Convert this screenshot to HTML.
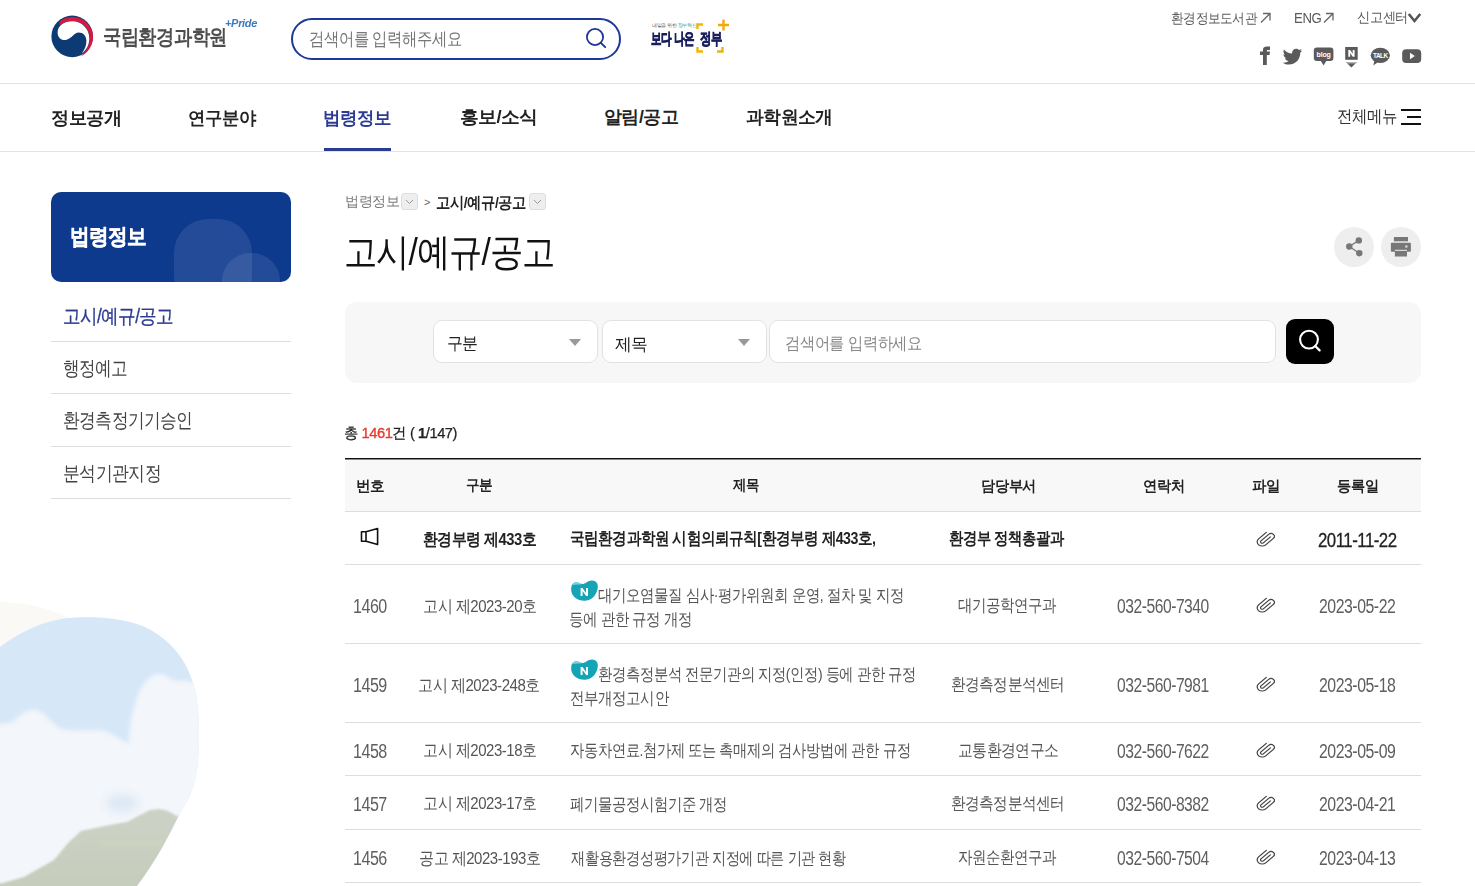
<!DOCTYPE html>
<html lang="ko"><head><meta charset="utf-8"><title>고시/예규/공고 | 국립환경과학원</title>
<style>
html,body{margin:0;padding:0;background:#fff;}
body{width:1475px;height:886px;overflow:hidden;position:relative;font-family:"Liberation Sans",sans-serif;}
.t{position:absolute;white-space:nowrap;line-height:1;transform-origin:0 0;}
.a{position:absolute;}
.hl{position:absolute;left:0;width:1475px;height:1px;background:#e3e3e3;}
.sbl{position:absolute;left:51px;width:240px;height:1px;background:#dcdcdc;}
.rl{position:absolute;left:345px;width:1076px;height:1px;background:#dddddd;}
.sel{position:absolute;top:320px;height:43px;background:#fff;border:1px solid #e2e2e2;border-radius:9px;box-sizing:border-box;}
.arr{position:absolute;width:0;height:0;border-left:6.5px solid transparent;border-right:6.5px solid transparent;border-top:7px solid #999;}
.clip{position:absolute;width:18px;height:16px;}
.bcbox{position:absolute;top:193px;width:17px;height:17px;box-sizing:border-box;background:#eeeeee;border:1px solid #dedede;border-radius:3px;}
</style></head>
<body>
<!-- header -->
<svg class="a" style="left:50px;top:15px" width="45" height="44" viewBox="50 15 45 44">
  <circle cx="72.2" cy="36.4" r="20.8" fill="#0c3b73"/>
  <path d="M59.5 21.8 C63.5 18.3 68 17 72.5 17 C80 17 86.5 20.5 90.3 27 C92.3 30.5 93 33.5 93 37 C93 46 87.5 53.5 80.2 56.6 C85.8 52.2 89.6 45.6 89.6 38.2 C89.6 28.5 82 21 72.5 21 C67.5 21 63 22.6 59.5 25.2 Z" fill="#d8183f"/>
  <path d="M57.6 32.5 C57.8 25.5 64 21.2 72.3 21.2 C81.6 21.2 89.3 28.6 89.3 38.2 C89.3 44.8 86.3 50.2 81.6 53.6 C84.6 50 86.4 45.6 86.4 41 C86.4 36 83 32.6 78.8 32.6 C73.8 32.6 71.8 38.6 66.6 39.8 C61.4 41 57.5 37.6 57.6 32.5 Z" fill="#ffffff"/>
</svg>
<div class="a" style="left:291px;top:18px;width:330px;height:42px;box-sizing:border-box;border:2px solid #1c3a9a;border-radius:21px;"></div>
<svg class="a" style="left:584px;top:26px" width="24" height="24" viewBox="0 0 24 24">
  <circle cx="11" cy="11" r="8.1" fill="none" stroke="#1c3494" stroke-width="1.8"/>
  <line x1="16.8" y1="16.8" x2="21.2" y2="21.2" stroke="#1c3494" stroke-width="1.9" stroke-linecap="round"/>
</svg>
<!-- 보다 나은 정부 -->
<div class="t" style="left:652px;top:23px;font-size:5px;color:#555;letter-spacing:-0.3px">내일을 위한 <span style="color:#2a9d8f">정부혁신</span></div>
<svg class="a" style="left:694px;top:17px" width="40" height="38" viewBox="0 0 40 38">
  <path d="M9 7.5 H3.5 V12" fill="none" stroke="#f2b705" stroke-width="2.4"/>
  <path d="M3.5 30 V34.5 H9" fill="none" stroke="#f2b705" stroke-width="2.4"/>
  <path d="M23 34.5 H28.5 V30" fill="none" stroke="#e7b416" stroke-width="2.4"/>
  <path d="M29.5 2.5 V13.5 M24 8 H35" fill="none" stroke="#f4a90a" stroke-width="2.4"/>
</svg>
<!-- top links arrows -->
<svg class="a" style="left:1259px;top:11px" width="13" height="13" viewBox="0 0 13 13"><path d="M2 11.5 L11 2.5 M4 2.5 H11 V9.5" fill="none" stroke="#666" stroke-width="1.3"/></svg>
<svg class="a" style="left:1322px;top:11px" width="13" height="13" viewBox="0 0 13 13"><path d="M2 11.5 L11 2.5 M4 2.5 H11 V9.5" fill="none" stroke="#666" stroke-width="1.3"/></svg>
<svg class="a" style="left:1407px;top:12px" width="15" height="12" viewBox="0 0 15 12"><path d="M1.8 2 L7.5 9 L13.2 2" fill="none" stroke="#555" stroke-width="2.6"/></svg>
<!-- social icons -->
<svg class="a" style="left:1255px;top:44px" width="170" height="26" viewBox="1255 44 170 26">
  <path d="M1263 65 V55 H1260 V51.5 H1263 V50 C1263 47 1265 46.5 1267.5 46.5 H1270 V50 H1268 C1267 50 1266.8 50.5 1266.8 51 V51.5 H1270 L1269.5 55 H1266.8 V65 Z" fill="#5a5a5a"/>
  <path d="M1302 50.5 C1301.3 50.8 1300.6 51 1299.8 51.1 C1300.6 50.6 1301.2 49.9 1301.5 49 C1300.7 49.4 1299.9 49.7 1299 49.9 C1298.3 49.1 1297.2 48.7 1296.1 48.7 C1293.9 48.7 1292.1 50.5 1292.1 52.7 C1292.1 53 1292.1 53.3 1292.2 53.6 C1288.9 53.4 1286 51.9 1284 49.4 C1283.7 50 1283.5 50.7 1283.5 51.4 C1283.5 52.8 1284.2 54 1285.3 54.7 C1284.6 54.7 1284 54.5 1283.5 54.2 C1283.5 56.2 1284.9 57.8 1286.7 58.2 C1286.1 58.4 1285.4 58.4 1284.9 58.3 C1285.4 59.9 1286.9 61 1288.6 61.1 C1287.3 62.2 1285.5 62.8 1283.7 62.8 C1283.4 62.8 1283 62.8 1282.7 62.7 C1284.5 63.9 1286.6 64.6 1288.9 64.6 C1296.2 64.6 1300.2 58.6 1300.2 53.3 V52.8 C1301 52.2 1301.6 51.4 1302 50.5 Z" fill="#5a5a5a"/>
  <rect x="1313.8" y="47.6" width="19.6" height="13.4" rx="3" fill="#5a5a5a"/>
  <path d="M1320.5 60.5 L1323.6 65.4 L1326.5 60.5 Z" fill="#5a5a5a"/>
  <text x="1323.6" y="57.3" font-family="Liberation Sans" font-weight="bold" font-size="7" fill="#fff" text-anchor="middle" letter-spacing="-0.2">blog</text>
  <rect x="1345.2" y="47" width="12.5" height="12.8" fill="#5a5a5a"/>
  <path d="M1348.3 56.8 V50 H1350.2 L1352.7 53.8 V50 H1354.6 V56.8 H1352.7 L1350.2 53 V56.8 Z" fill="#fff"/>
  <path d="M1345.8 62 H1357 L1351.4 67.5 Z" fill="#5a5a5a"/>
  <path d="M1346.5 62.8 H1356.3" stroke="#fff" stroke-width="0.8"/>
  <ellipse cx="1380.3" cy="55.3" rx="9.6" ry="7.6" fill="#5a5a5a"/>
  <path d="M1374.5 60 L1373.3 65.6 L1378.5 61.8 Z" fill="#5a5a5a"/>
  <text x="1380.3" y="57.8" font-family="Liberation Sans" font-weight="bold" font-size="6.4" fill="#fff" text-anchor="middle" letter-spacing="-0.5">TALK</text>
  <rect x="1402.2" y="49.2" width="19" height="13.7" rx="4" fill="#5a5a5a"/>
  <path d="M1410 52.8 L1414.8 56 L1410 59.2 Z" fill="#fff"/>
</svg>
<div class="hl" style="top:83px;"></div>
<!-- nav -->
<div class="a" style="left:324px;top:148px;width:67px;height:3px;background:#2a3b90"></div>
<div class="hl" style="top:151px;"></div>
<div class="a" style="left:1401px;top:109px;width:20px;height:2px;background:#111"></div>
<div class="a" style="left:1407px;top:116px;width:14px;height:2px;background:#111"></div>
<div class="a" style="left:1401px;top:123px;width:20px;height:2px;background:#111"></div>
<!-- sidebar -->
<div class="a" style="left:51px;top:192px;width:240px;height:90px;background:#0e3a8e;border-radius:10px;overflow:hidden">
  <div class="a" style="left:123px;top:27px;width:78px;height:90px;border-radius:34px;background:rgba(255,255,255,0.09)"></div>
  <div class="a" style="left:171px;top:61px;width:58px;height:60px;border-radius:28px;background:rgba(255,255,255,0.09)"></div>
</div>
<div class="sbl" style="top:341px"></div>
<div class="sbl" style="top:393px"></div>
<div class="sbl" style="top:446px"></div>
<div class="sbl" style="top:498px"></div>
<!-- sky blob -->
<svg class="a" style="left:0;top:590px" width="215" height="296" viewBox="0 590 215 296">
  <defs>
    <clipPath id="cb"><path d="M0 647 C20 632 45 619 75 617.5 C100 616.5 125 618.5 145 627 C170 639 188 660 195 690 C200 712 200 745 197 770 C194 790 188 800 180 813 C168 838 155 862 137 886 L0 886 Z"/></clipPath>
    <filter id="bl" x="-30%" y="-30%" width="160%" height="160%"><feGaussianBlur stdDeviation="2.2"/></filter>
    <filter id="bl2" x="-50%" y="-50%" width="200%" height="200%"><feGaussianBlur stdDeviation="5"/></filter>
    <filter id="bl3" x="-10%" y="-10%" width="120%" height="120%"><feGaussianBlur stdDeviation="0.8"/></filter>
    <linearGradient id="mg" x1="0" y1="0" x2="0" y2="1"><stop offset="0" stop-color="#cdd2c6"/><stop offset="1" stop-color="#c5ccba"/></linearGradient>
  </defs>
  <path d="M0 602 C20 603 45 605 68 618 C40 622 18 633 0 647 Z" fill="#fbf9f6"/>
  <g clip-path="url(#cb)">
    <rect x="0" y="600" width="215" height="296" fill="#d6e7f8"/>
    <g filter="url(#bl)" fill="#f3f6fa">
      <path d="M-10 726 L13 722 C20 714 28 709 36 710 C44 711 50 722 59 728 C68 731 85 731 97 730 C107 730 115 736 129 744 C129 728 131 712 140 690 C146 680 152 674 160 674 C166 674 170 680 176 681 C182 681 186 680 196 683 L215 686 L215 890 L-10 890 Z"/>
    </g>
    <ellipse cx="122" cy="803" rx="16" ry="9" fill="#dce8f5" filter="url(#bl2)"/>
    <g filter="url(#bl3)">
    <path d="M177 816 L168 811 L160 809 L150 810 L140 815 L127 822 L115 824 L100 827 L81 831 L68 843 L54 860 L24 877 L3 883 L-5 884 L-5 900 L215 900 L215 816 Z" fill="url(#mg)"/>
    <rect x="100" y="840" width="62" height="7" fill="#d6d8c0" opacity="0.35"/>
    </g>
  </g>
</svg>
<!-- breadcrumb boxes -->
<div class="bcbox" style="left:401px"><svg width="15" height="15" viewBox="0 0 15 15" style="position:absolute;left:0;top:0"><path d="M4 6 L7.5 9.5 L11 6" fill="none" stroke="#999" stroke-width="1"/></svg></div>
<div class="t" style="left:424px;top:197px;font-size:11px;color:#666">&gt;</div>
<div class="bcbox" style="left:529px"><svg width="15" height="15" viewBox="0 0 15 15" style="position:absolute;left:0;top:0"><path d="M4 6 L7.5 9.5 L11 6" fill="none" stroke="#999" stroke-width="1"/></svg></div>
<!-- share/print -->
<div class="a" style="left:1334px;top:227px;width:40px;height:40px;border-radius:20px;background:#eeeeee"></div>
<div class="a" style="left:1381px;top:227px;width:40px;height:40px;border-radius:20px;background:#eeeeee"></div>
<svg class="a" style="left:1334px;top:227px" width="40" height="40" viewBox="0 0 40 40">
  <path d="M15.3 19.5 L24.8 13.4 M15.3 19.5 L25.3 26.2" stroke="#777" stroke-width="1.3"/>
  <circle cx="24.8" cy="13.4" r="3.2" fill="#777"/><circle cx="15.3" cy="19.5" r="3.2" fill="#777"/><circle cx="25.3" cy="26.2" r="3.2" fill="#777"/>
</svg>
<svg class="a" style="left:1381px;top:227px" width="40" height="40" viewBox="0 0 40 40">
  <rect x="12.9" y="10" width="14.1" height="4.3" fill="#777"/>
  <rect x="9.9" y="15.7" width="20" height="9" rx="0.8" fill="#777"/>
  <rect x="13.9" y="23.8" width="12.1" height="5.7" fill="#777"/>
  <rect x="13.9" y="22.8" width="12.1" height="1" fill="#eee"/>
  <rect x="24.4" y="18.5" width="2" height="2" fill="#eee"/>
</svg>
<!-- search panel -->
<div class="a" style="left:345px;top:302px;width:1076px;height:81px;background:#f7f7f7;border-radius:12px"></div>
<div class="sel" style="left:433px;width:165px"></div>
<div class="sel" style="left:602px;width:165px"></div>
<div class="sel" style="left:769px;width:507px"></div>
<div class="arr" style="left:569px;top:339px"></div>
<div class="arr" style="left:738px;top:339px"></div>
<div class="a" style="left:1286px;top:319px;width:48px;height:45px;background:#000;border-radius:9px"></div>
<svg class="a" style="left:1286px;top:319px" width="48" height="45" viewBox="0 0 48 45">
  <circle cx="23" cy="20.6" r="8.9" fill="none" stroke="#fff" stroke-width="2.1"/>
  <line x1="29.2" y1="27" x2="33.6" y2="31.4" stroke="#fff" stroke-width="2.3" stroke-linecap="round"/>
</svg>
<!-- table -->
<div class="a" style="left:345px;top:459px;width:1076px;height:52px;background:#f8f8f8"></div>
<div class="a" style="left:345px;top:458px;width:1076px;height:1px;background:#111"></div><div class="a" style="left:345px;top:459px;width:1076px;height:1px;background:#8a8a8a"></div>
<div class="rl" style="top:511px"></div>
<div class="rl" style="top:564px"></div>
<div class="rl" style="top:643px"></div>
<div class="rl" style="top:722px"></div>
<div class="rl" style="top:775px"></div>
<div class="rl" style="top:829px"></div>
<div class="rl" style="top:882px"></div>
<svg class="a" style="left:358px;top:526px" width="24" height="22" viewBox="358 526 24 22">
  <path d="M361.5 531.8 H366 V541.3 H361.5 Z M366 531.8 L377.6 528.6 V544.6 L366 541.3" fill="none" stroke="#111" stroke-width="1.6" stroke-linejoin="round"/>
</svg>
<!-- paperclips -->
<svg class="a" style="left:1256px;top:530.5px" width="19" height="16" viewBox="0.6 0.6 22.8 22.8" preserveAspectRatio="none"><path transform="matrix(0 -1 -1 0 24 24)" d="M21.44 11.05l-9.19 9.19a6 6 0 0 1-8.49-8.49l9.19-9.19a4 4 0 0 1 5.66 5.66l-9.2 9.19a2 2 0 0 1-2.83-2.83l8.49-8.48" fill="none" stroke="#444" stroke-width="1.5" stroke-linecap="round" stroke-linejoin="round"/></svg>
<svg class="a" style="left:1256px;top:596.5px" width="19" height="16" viewBox="0.6 0.6 22.8 22.8" preserveAspectRatio="none"><path transform="matrix(0 -1 -1 0 24 24)" d="M21.44 11.05l-9.19 9.19a6 6 0 0 1-8.49-8.49l9.19-9.19a4 4 0 0 1 5.66 5.66l-9.2 9.19a2 2 0 0 1-2.83-2.83l8.49-8.48" fill="none" stroke="#444" stroke-width="1.5" stroke-linecap="round" stroke-linejoin="round"/></svg>
<svg class="a" style="left:1256px;top:675.5px" width="19" height="16" viewBox="0.6 0.6 22.8 22.8" preserveAspectRatio="none"><path transform="matrix(0 -1 -1 0 24 24)" d="M21.44 11.05l-9.19 9.19a6 6 0 0 1-8.49-8.49l9.19-9.19a4 4 0 0 1 5.66 5.66l-9.2 9.19a2 2 0 0 1-2.83-2.83l8.49-8.48" fill="none" stroke="#444" stroke-width="1.5" stroke-linecap="round" stroke-linejoin="round"/></svg>
<svg class="a" style="left:1256px;top:741.5px" width="19" height="16" viewBox="0.6 0.6 22.8 22.8" preserveAspectRatio="none"><path transform="matrix(0 -1 -1 0 24 24)" d="M21.44 11.05l-9.19 9.19a6 6 0 0 1-8.49-8.49l9.19-9.19a4 4 0 0 1 5.66 5.66l-9.2 9.19a2 2 0 0 1-2.83-2.83l8.49-8.48" fill="none" stroke="#444" stroke-width="1.5" stroke-linecap="round" stroke-linejoin="round"/></svg>
<svg class="a" style="left:1256px;top:794.5px" width="19" height="16" viewBox="0.6 0.6 22.8 22.8" preserveAspectRatio="none"><path transform="matrix(0 -1 -1 0 24 24)" d="M21.44 11.05l-9.19 9.19a6 6 0 0 1-8.49-8.49l9.19-9.19a4 4 0 0 1 5.66 5.66l-9.2 9.19a2 2 0 0 1-2.83-2.83l8.49-8.48" fill="none" stroke="#444" stroke-width="1.5" stroke-linecap="round" stroke-linejoin="round"/></svg>
<svg class="a" style="left:1256px;top:848.5px" width="19" height="16" viewBox="0.6 0.6 22.8 22.8" preserveAspectRatio="none"><path transform="matrix(0 -1 -1 0 24 24)" d="M21.44 11.05l-9.19 9.19a6 6 0 0 1-8.49-8.49l9.19-9.19a4 4 0 0 1 5.66 5.66l-9.2 9.19a2 2 0 0 1-2.83-2.83l8.49-8.48" fill="none" stroke="#444" stroke-width="1.5" stroke-linecap="round" stroke-linejoin="round"/></svg>
<!-- N badges -->
<svg class="a" style="left:566px;top:577px" width="36" height="26" viewBox="566 577 36 26">
  <path d="M571.3 591 C570.8 586 572.5 582.5 576 582.3 C579 582.1 580.5 584.5 583 584 C586 583.3 588 580.3 592 580.4 C596 580.5 598.3 583.5 597.8 587.5 C597.3 592.5 593.5 600.5 585 600.8 C577 601 571.8 596 571.3 591 Z" fill="#15a3b6"/>
  <path d="M572.3 585 C573 582.3 575.5 581.8 578 582.4 C580 582.9 581 584 582.6 584.1 C579 584.8 575 584.6 572.3 585 Z" fill="#86d2dc"/>
  <path d="M580.6 596 V588 H582.5 L586 593 V588 H588 V596 H586.1 L582.6 591 V596 Z" fill="#fff"/>
</svg>
<svg class="a" style="left:566px;top:656px" width="36" height="26" viewBox="566 577 36 26">
  <path d="M571.3 591 C570.8 586 572.5 582.5 576 582.3 C579 582.1 580.5 584.5 583 584 C586 583.3 588 580.3 592 580.4 C596 580.5 598.3 583.5 597.8 587.5 C597.3 592.5 593.5 600.5 585 600.8 C577 601 571.8 596 571.3 591 Z" fill="#15a3b6"/>
  <path d="M572.3 585 C573 582.3 575.5 581.8 578 582.4 C580 582.9 581 584 582.6 584.1 C579 584.8 575 584.6 572.3 585 Z" fill="#86d2dc"/>
  <path d="M580.6 596 V588 H582.5 L586 593 V588 H588 V596 H586.1 L582.6 591 V596 Z" fill="#fff"/>
</svg>
<div class="t" style="left:103.0px;top:26.0px;font-size:21.1px;letter-spacing:-0.63px;color:#4d4d4d;transform:scaleX(0.871);font-weight:bold;">국립환경과학원</div>
<div class="t" style="left:225.0px;top:18.0px;font-size:11.4px;letter-spacing:-0.34px;color:#3a7ac4;transform:scaleX(0.968);font-weight:bold;font-style:italic;">+Pride</div>
<div class="t" style="left:309.0px;top:31.0px;font-size:17.6px;letter-spacing:-0.53px;color:#777;transform:scaleX(0.852);">검색어를 입력해주세요</div>
<div class="t" style="left:1171.0px;top:11.0px;font-size:14.1px;letter-spacing:-0.42px;color:#5a5a5a;transform:scaleX(0.903);">환경정보도서관</div>
<div class="t" style="left:1293.5px;top:11.3px;font-size:14.3px;letter-spacing:-0.43px;color:#5a5a5a;transform:scaleX(0.922);">ENG</div>
<div class="t" style="left:1357.0px;top:10.0px;font-size:14.1px;letter-spacing:-0.42px;color:#5a5a5a;transform:scaleX(0.941);">신고센터</div>
<div class="t" style="left:50.5px;top:110.0px;font-size:17.8px;letter-spacing:-0.53px;color:#222;transform:scaleX(1.008);font-weight:bold;">정보공개</div>
<div class="t" style="left:187.5px;top:110.0px;font-size:17.8px;letter-spacing:-0.53px;color:#222;transform:scaleX(0.964);font-weight:bold;">연구분야</div>
<div class="t" style="left:323.0px;top:110.0px;font-size:17.8px;letter-spacing:-0.53px;color:#2c3b91;transform:scaleX(0.97);font-weight:bold;">법령정보</div>
<div class="t" style="left:460.0px;top:109.0px;font-size:17.8px;letter-spacing:-0.53px;color:#222;transform:scaleX(1.042);font-weight:bold;">홍보/소식</div>
<div class="t" style="left:604.0px;top:109.0px;font-size:17.8px;letter-spacing:-0.53px;color:#222;transform:scaleX(1.0);font-weight:bold;">알림/공고</div>
<div class="t" style="left:746.0px;top:109.0px;font-size:17.8px;letter-spacing:-0.53px;color:#222;transform:scaleX(0.988);font-weight:bold;">과학원소개</div>
<div class="t" style="left:1337.0px;top:108.0px;font-size:17.1px;letter-spacing:-0.51px;color:#333;transform:scaleX(0.905);">전체메뉴</div>
<div class="t" style="left:69.5px;top:226.0px;font-size:22.2px;letter-spacing:-0.67px;color:#fff;transform:scaleX(0.893);font-weight:bold;-webkit-text-stroke:0.5px #fff;">법령정보</div>
<div class="t" style="left:62.9px;top:306.7px;font-size:19.8px;letter-spacing:-0.59px;color:#2c3b91;transform:scaleX(0.874);-webkit-text-stroke:0.35px #2c3b91;">고시/예규/공고</div>
<div class="t" style="left:62.9px;top:358.7px;font-size:19.8px;letter-spacing:-0.59px;color:#444;transform:scaleX(0.83);">행정예고</div>
<div class="t" style="left:62.9px;top:410.8px;font-size:19.8px;letter-spacing:-0.59px;color:#444;transform:scaleX(0.835);">환경측정기기승인</div>
<div class="t" style="left:62.9px;top:464.0px;font-size:19.8px;letter-spacing:-0.59px;color:#444;transform:scaleX(0.841);">분석기관지정</div>
<div class="t" style="left:345.0px;top:194.2px;font-size:14.0px;letter-spacing:-0.42px;color:#7a7a7a;transform:scaleX(1.004);">법령정보</div>
<div class="t" style="left:436.2px;top:194.7px;font-size:15.5px;letter-spacing:-0.46px;color:#222;transform:scaleX(0.892);font-weight:bold;">고시/예규/공고</div>
<div class="t" style="left:344.3px;top:233.4px;font-size:38.4px;letter-spacing:-1.15px;color:#111;transform:scaleX(0.876);">고시/예규/공고</div>
<div class="t" style="left:447.0px;top:334.8px;font-size:17.0px;letter-spacing:-0.51px;color:#222;transform:scaleX(0.937);">구분</div>
<div class="t" style="left:615.4px;top:335.8px;font-size:17.0px;letter-spacing:-0.51px;color:#222;transform:scaleX(0.987);">제목</div>
<div class="t" style="left:785.0px;top:336.4px;font-size:16.7px;letter-spacing:-0.5px;color:#888;transform:scaleX(0.898);">검색어를 입력하세요</div>
<div class="t" style="left:356.2px;top:478.7px;font-size:14.6px;letter-spacing:-0.44px;color:#222;transform:scaleX(0.973);font-weight:bold;">번호</div>
<div class="t" style="left:466.4px;top:477.8px;font-size:14.6px;letter-spacing:-0.44px;color:#222;transform:scaleX(0.906);font-weight:bold;">구분</div>
<div class="t" style="left:733.0px;top:478.0px;font-size:14.6px;letter-spacing:-0.44px;color:#222;transform:scaleX(0.893);font-weight:bold;">제목</div>
<div class="t" style="left:981.0px;top:479.0px;font-size:14.6px;letter-spacing:-0.44px;color:#222;transform:scaleX(0.946);font-weight:bold;">담당부서</div>
<div class="t" style="left:1143.0px;top:479.0px;font-size:14.6px;letter-spacing:-0.44px;color:#222;transform:scaleX(0.95);font-weight:bold;">연락처</div>
<div class="t" style="left:1252.0px;top:479.0px;font-size:14.6px;letter-spacing:-0.44px;color:#222;transform:scaleX(0.962);font-weight:bold;">파일</div>
<div class="t" style="left:1336.7px;top:479.0px;font-size:14.6px;letter-spacing:-0.44px;color:#222;transform:scaleX(0.947);font-weight:bold;">등록일</div>
<div class="t" style="left:423.3px;top:530.5px;font-size:17.0px;letter-spacing:-0.51px;color:#222;transform:scaleX(0.87);font-weight:bold;">환경부령 제433호</div>
<div class="t" style="left:569.8px;top:530.0px;font-size:16.5px;letter-spacing:-0.49px;color:#222;transform:scaleX(0.856);font-weight:bold;">국립환경과학원 시험의뢰규칙[환경부령 제433호,</div>
<div class="t" style="left:948.6px;top:530.0px;font-size:17.0px;letter-spacing:-0.51px;color:#222;transform:scaleX(0.843);font-weight:bold;">환경부 정책총괄과</div>
<div class="t" style="left:1317.6px;top:529.6px;font-size:20.5px;letter-spacing:-0.61px;color:#222;transform:scaleX(0.821);-webkit-text-stroke:0.3px #222;">2011-11-22</div>
<div class="t" style="left:352.5px;top:596.3px;font-size:20.5px;letter-spacing:-0.61px;color:#5e5e5e;transform:scaleX(0.783);">1460</div>
<div class="t" style="left:422.5px;top:597.8px;font-size:17.0px;letter-spacing:-0.51px;color:#555;transform:scaleX(0.881);">고시 제2023-20호</div>
<div class="t" style="left:958.0px;top:597.3px;font-size:17.0px;letter-spacing:-0.51px;color:#555;transform:scaleX(0.851);">대기공학연구과</div>
<div class="t" style="left:1117.0px;top:596.3px;font-size:20.5px;letter-spacing:-0.61px;color:#5e5e5e;transform:scaleX(0.763);">032-560-7340</div>
<div class="t" style="left:1318.5px;top:596.3px;font-size:20.5px;letter-spacing:-0.61px;color:#5e5e5e;transform:scaleX(0.773);">2023-05-22</div>
<div class="t" style="left:352.5px;top:675.0px;font-size:20.5px;letter-spacing:-0.61px;color:#5e5e5e;transform:scaleX(0.783);">1459</div>
<div class="t" style="left:418.1px;top:676.5px;font-size:17.0px;letter-spacing:-0.51px;color:#555;transform:scaleX(0.884);">고시 제2023-248호</div>
<div class="t" style="left:951.0px;top:676.0px;font-size:17.0px;letter-spacing:-0.51px;color:#555;transform:scaleX(0.859);">환경측정분석센터</div>
<div class="t" style="left:1117.0px;top:675.0px;font-size:20.5px;letter-spacing:-0.61px;color:#5e5e5e;transform:scaleX(0.763);">032-560-7981</div>
<div class="t" style="left:1318.5px;top:675.0px;font-size:20.5px;letter-spacing:-0.61px;color:#5e5e5e;transform:scaleX(0.773);">2023-05-18</div>
<div class="t" style="left:352.5px;top:740.5px;font-size:20.5px;letter-spacing:-0.61px;color:#5e5e5e;transform:scaleX(0.783);">1458</div>
<div class="t" style="left:422.5px;top:742.0px;font-size:17.0px;letter-spacing:-0.51px;color:#555;transform:scaleX(0.881);">고시 제2023-18호</div>
<div class="t" style="left:957.5px;top:741.5px;font-size:17.0px;letter-spacing:-0.51px;color:#555;transform:scaleX(0.871);">교통환경연구소</div>
<div class="t" style="left:1117.0px;top:740.5px;font-size:20.5px;letter-spacing:-0.61px;color:#5e5e5e;transform:scaleX(0.763);">032-560-7622</div>
<div class="t" style="left:1318.5px;top:740.5px;font-size:20.5px;letter-spacing:-0.61px;color:#5e5e5e;transform:scaleX(0.773);">2023-05-09</div>
<div class="t" style="left:352.5px;top:793.5px;font-size:20.5px;letter-spacing:-0.61px;color:#5e5e5e;transform:scaleX(0.783);">1457</div>
<div class="t" style="left:422.5px;top:795.0px;font-size:17.0px;letter-spacing:-0.51px;color:#555;transform:scaleX(0.881);">고시 제2023-17호</div>
<div class="t" style="left:950.5px;top:794.5px;font-size:17.0px;letter-spacing:-0.51px;color:#555;transform:scaleX(0.859);">환경측정분석센터</div>
<div class="t" style="left:1117.0px;top:793.5px;font-size:20.5px;letter-spacing:-0.61px;color:#5e5e5e;transform:scaleX(0.763);">032-560-8382</div>
<div class="t" style="left:1318.5px;top:793.5px;font-size:20.5px;letter-spacing:-0.61px;color:#5e5e5e;transform:scaleX(0.773);">2023-04-21</div>
<div class="t" style="left:352.5px;top:848.0px;font-size:20.5px;letter-spacing:-0.61px;color:#5e5e5e;transform:scaleX(0.783);">1456</div>
<div class="t" style="left:419.0px;top:849.5px;font-size:17.0px;letter-spacing:-0.51px;color:#555;transform:scaleX(0.88);">공고 제2023-193호</div>
<div class="t" style="left:957.5px;top:849.0px;font-size:17.0px;letter-spacing:-0.51px;color:#555;transform:scaleX(0.854);">자원순환연구과</div>
<div class="t" style="left:1117.0px;top:848.0px;font-size:20.5px;letter-spacing:-0.61px;color:#5e5e5e;transform:scaleX(0.763);">032-560-7504</div>
<div class="t" style="left:1318.5px;top:848.0px;font-size:20.5px;letter-spacing:-0.61px;color:#5e5e5e;transform:scaleX(0.773);">2023-04-13</div>
<div class="t" style="left:598.2px;top:587.2px;font-size:16.5px;letter-spacing:-0.49px;color:#555;transform:scaleX(0.85);">대기오염물질 심사·평가위원회 운영, 절차 및 지정</div>
<div class="t" style="left:569.4px;top:610.9px;font-size:16.5px;letter-spacing:-0.49px;color:#555;transform:scaleX(0.853);">등에 관한 규정 개정</div>
<div class="t" style="left:598.2px;top:666.2px;font-size:16.5px;letter-spacing:-0.49px;color:#555;transform:scaleX(0.843);">환경측정분석 전문기관의 지정(인정) 등에 관한 규정</div>
<div class="t" style="left:570.4px;top:689.9px;font-size:16.5px;letter-spacing:-0.49px;color:#555;transform:scaleX(0.854);">전부개정고시안</div>
<div class="t" style="left:570.0px;top:742.0px;font-size:16.5px;letter-spacing:-0.49px;color:#555;transform:scaleX(0.842);">자동차연료.첨가제 또는 촉매제의 검사방법에 관한 규정</div>
<div class="t" style="left:569.8px;top:796.0px;font-size:16.5px;letter-spacing:-0.49px;color:#555;transform:scaleX(0.847);">폐기물공정시험기준 개정</div>
<div class="t" style="left:570.8px;top:850.0px;font-size:16.5px;letter-spacing:-0.49px;color:#555;transform:scaleX(0.833);">재활용환경성평가기관 지정에 따른 기관 현황</div>
<div class="t" style="left:344.2px;top:425.3px;font-size:15.4px;letter-spacing:-0.46px;color:#222;transform:scaleX(0.954);-webkit-text-stroke:0.25px #222;">총 <span style="color:#e6392b;-webkit-text-stroke:0.35px #e6392b">1461</span>건 ( <b style="color:#222">1</b>/147)</div>
<div class="t" style="left:651.0px;top:29.7px;font-size:16.4px;letter-spacing:-0.49px;color:#1b1f5e;transform:scaleX(0.657);font-weight:bold;-webkit-text-stroke:0.7px #1b1f5e;">보다 나은</div>
<div class="t" style="left:699.5px;top:29.7px;font-size:16.4px;letter-spacing:-0.49px;color:#1b1f5e;transform:scaleX(0.71);font-weight:bold;-webkit-text-stroke:0.7px #1b1f5e;">정부</div>
</body></html>
